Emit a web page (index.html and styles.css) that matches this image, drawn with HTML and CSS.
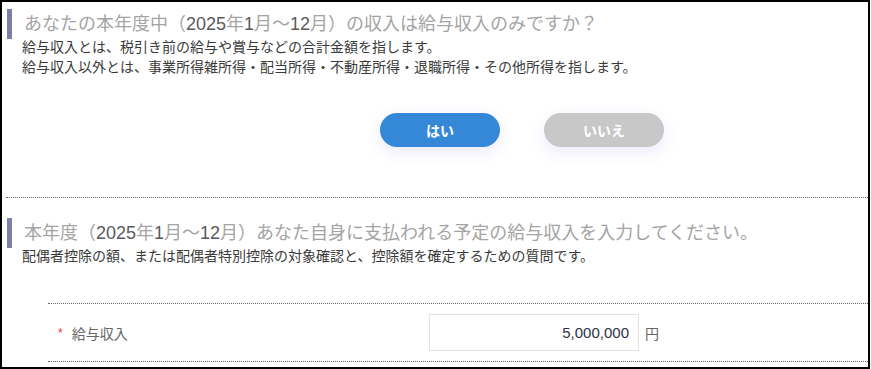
FILE: index.html
```html
<!DOCTYPE html>
<html lang="ja">

<head>
    <meta charset="UTF-8">
    <meta name="viewport" content="width=device-width, initial-scale=1.0">
    <title>給与収入</title>
    <link rel="stylesheet" href="styles.css">
</head>

<body>
    <div id="frame">

        <div class="question">
            <h2 class="qTitle">あなたの本年度中（<span class="num">2025</span>年<span class="num">1</span>月〜<span class="num">12</span>月）の収入は給与収入のみですか？</h2>
            <p class="qNote">
                給与収入とは、税引き前の給与や賞与などの合計金額を指します。<br>
                給与収入以外とは、事業所得雑所得・配当所得・不動産所得・退職所得・その他所得を指します。
            </p>
            <div class="answers">
                <button class="btn yes">はい</button>
                <button class="btn no">いいえ</button>
            </div>
        </div>

        <div class="question second">
            <h2 class="qTitle">本年度（<span class="num">2025</span>年<span class="num">1</span>月〜<span class="num">12</span>月）あなた自身に支払われる予定の給与収入を入力してください。</h2>
            <p class="qNote">配偶者控除の額、または配偶者特別控除の対象確認と、控除額を確定するための質問です。</p>

            <div class="row">
                <label class="rowLabel"><span class="req">*</span>給与収入</label>
                <input type="text" class="amount" value="5,000,000">
                <span class="unit">円</span>
            </div>
        </div>

    </div>
</body>

</html>
```

FILE: styles.css
```css
body {
    margin: 0;
    background: #fff;
    font-family: "Liberation Sans", "Noto Sans CJK JP", sans-serif;
}

#frame {
    width: 870px;
    height: 369px;
    box-sizing: border-box;
    border: 2px solid #000;
    overflow: hidden;
}

.question {
    padding-top: 7px;
}

.second {
    margin-left: 4px;
    padding-top: 20px;
    border-top: 1px dotted #666;
}

.second .qTitle {
    margin-left: 1px;
}

.second .qNote {
    padding-left: 16px;
}

.qTitle {
    margin: 0 0 0 5px;
    height: 30px;
    line-height: 30px;
    padding-left: 12px;
    border-left: 5px solid #7a80aa;
    font-size: 18px;
    font-weight: normal;
    color: #a4a4a4;
    white-space: nowrap;
}

.num {
    color: #5a5a5a;
}

.qNote {
    margin: -2px 0 0;
    padding-left: 20px;
    font-size: 14px;
    line-height: 20px;
    color: #3a3a3a;
}

.answers {
    display: flex;
    gap: 44px;
    margin: 36px 0 50px 378px;
}

.btn {
    width: 120px;
    height: 34px;
    border: none;
    border-radius: 17px;
    color: #fff;
    font-family: "Noto Sans CJK JP", sans-serif;
    font-size: 14px;
    font-weight: bold;
    box-shadow: 0 5px 16px rgba(120, 100, 240, 0.14);
}

.yes {
    background: #3588d8;
}

.no {
    background: #c8c8c8;
}

.row {
    display: flex;
    align-items: center;
    margin: 37px 0 0 42px;
    height: 57px;
    border-top: 1px dotted #666;
    border-bottom: 1px dotted #666;
}

.rowLabel {
    width: 381px;
    font-size: 14px;
    color: #666;
}

.req {
    color: #e8333a;
    font-size: 12px;
    margin: 0 9px 0 10px;
    position: relative;
    top: -2px;
}

.amount {
    width: 210px;
    height: 37px;
    box-sizing: border-box;
    border: 1px solid #e2e2e2;
    padding: 0 9px 0 0;
    text-align: right;
    font-family: "Liberation Sans", sans-serif;
    font-size: 15px;
    color: #2d3142;
}

.unit {
    margin-left: 6px;
    font-size: 14px;
    color: #666;
}
```
